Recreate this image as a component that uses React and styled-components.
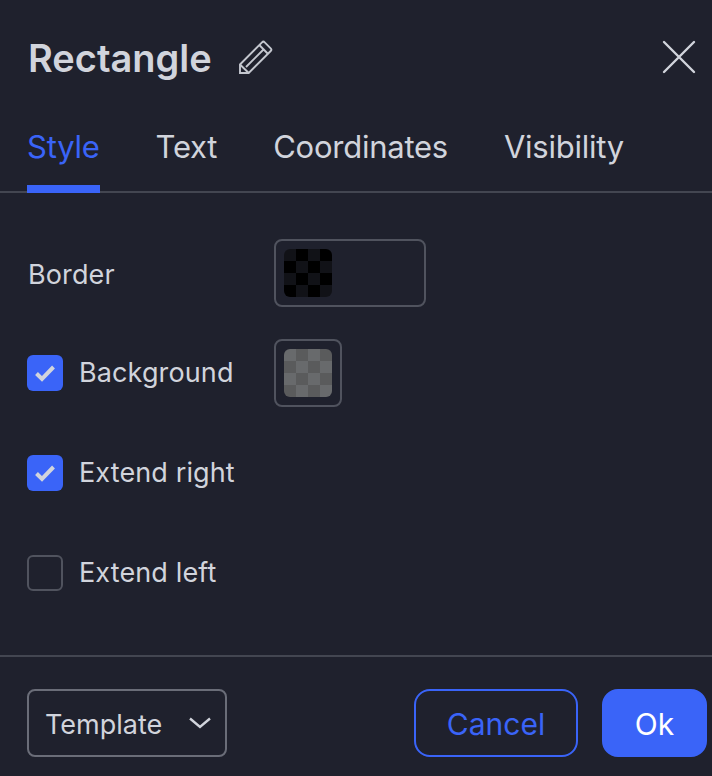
import React from 'react'
import styled, { createGlobalStyle } from 'styled-components'

const blue = '#3a64f8'
const text = '#d1d4dc'
const background = '#1f212d'

const GlobalStyle = createGlobalStyle`
  html, body {
    margin: 0;
    padding: 0;
    background: ${background};
  }
  * {
    box-sizing: border-box;
  }
`

const Dialog = styled.div`
  width: 712px;
  height: 776px;
  overflow: hidden;
  display: flex;
  flex-direction: column;
  background: ${background};
  color: ${text};
  font-family: Inter, "Liberation Sans", sans-serif;
`

const Header = styled.div`
  height: 112px;
  padding: 0 16px 0 28px;
  display: flex;
  align-items: center;
  flex-shrink: 0;
`

const Title = styled.h1`
  margin: 4px 0 0;
  font-size: 38px;
  line-height: 46px;
  font-weight: 600;
  color: ${text};
`

const EditIcon = styled.svg`
  margin: 2px 0 0 27px;
  width: 34px;
  height: 34px;
`

const CloseIcon = styled.svg`
  margin: 2px 0 0 auto;
  width: 34px;
  height: 34px;
`

const Tabs = styled.div`
  height: 81px;
  padding-left: 27px;
  display: flex;
  gap: 56px;
  border-bottom: 2px solid #434651;
  flex-shrink: 0;
`

const Tab = styled.div`
  position: relative;
  height: 81px;
  padding-top: 16px;
  font-size: 31px;
  letter-spacing: -0.25px;
  line-height: 38px;
  color: ${(p) => (p.$active ? blue : text)};

  &::after {
    content: '';
    display: ${(p) => (p.$active ? 'block' : 'none')};
    position: absolute;
    left: 0;
    right: 0;
    bottom: 0;
    height: 8px;
    background: ${blue};
  }
`

const Body = styled.div`
  flex: 1;
  padding: 46px 27px 0;
  display: flex;
  flex-direction: column;
  gap: 32px;
`

const Row = styled.div`
  height: 68px;
  display: flex;
  align-items: center;
`

const LabelCell = styled.div`
  width: 247px;
  display: flex;
  align-items: center;
  gap: 16px;
  font-size: 27px;
  letter-spacing: 0.12px;
  line-height: 34px;
`

const RowLabel = styled.span`
  padding: ${(p) => (p.$plain ? '4px 0 0 1px' : '0')};
`

const Checkbox = styled.span`
  width: 36px;
  height: 36px;
  border-radius: 6px;
  display: flex;
  align-items: center;
  justify-content: center;
  background: ${(p) => (p.$checked ? blue : 'transparent')};
  border: ${(p) => (p.$checked ? 'none' : '2px solid #50535e')};
`

const SwatchBox = styled.div`
  width: ${(p) => (p.$wide ? '152px' : '68px')};
  height: 68px;
  padding: 8px;
  border: 2px solid #50535e;
  border-radius: 8px;
`

const Swatch = styled.div`
  width: 48px;
  height: 48px;
  border-radius: 6px;
  background-image: conic-gradient(
    ${(p) => p.$dark} 25%,
    ${(p) => p.$light} 0 50%,
    ${(p) => p.$dark} 0 75%,
    ${(p) => p.$light} 0
  );
  background-size: 24px 24px;
`

const Footer = styled.div`
  height: 121px;
  padding: 32px 5px 0 27px;
  display: flex;
  align-items: flex-start;
  border-top: 2px solid #434651;
  flex-shrink: 0;
`

const Select = styled.div`
  width: 200px;
  height: 68px;
  padding: 2px 14px 0 16px;
  display: flex;
  align-items: center;
  justify-content: space-between;
  border: 2px solid #6a6d78;
  border-radius: 8px;
  font-size: 27px;
  color: ${text};
`

const Chevron = styled.svg`
  margin-top: -3px;
`

const Button = styled.button`
  height: 68px;
  width: ${(p) => p.$width}px;
  margin-left: ${(p) => p.$gap}px;
  padding: 2px 0 0;
  border-radius: 16px;
  border: 2px solid ${blue};
  background: ${(p) => (p.$primary ? blue : 'transparent')};
  color: ${(p) => (p.$primary ? '#ffffff' : blue)};
  font-family: inherit;
  font-size: 30px;
`

const Check = () => (
  <svg width="22" height="18" viewBox="0 0 22 18" fill="none">
    <path d="M2.500 9.500 8 15 19.500 3" stroke={text} strokeWidth="4" />
  </svg>
)

const rows = [
  { label: 'Border', swatch: { wide: true, light: '#111217', dark: '#000000' } },
  { label: 'Background', checked: true, swatch: { light: '#686a6c', dark: '#5a5b5c' } },
  { label: 'Extend right', checked: true },
  { label: 'Extend left', checked: false },
]

export default function App() {
  return (
    <Dialog>
      <GlobalStyle />
      <Header>
        <Title>Rectangle</Title>
        <EditIcon viewBox="0 0 34 34" fill="none" stroke="#c4c7cf" strokeWidth="1.900">
          <path d="M1 33V24.500L23 2.300c.8-.8 1.900-.8 2.700 0l6 6c.8.8.8 1.900 0 2.700L9.700 33H1Z" />
          <path d="M1 24.500 9.700 33M7 27 25 9M20.300 5l8.800 9" />
        </EditIcon>
        <CloseIcon viewBox="0 0 34 34" fill="none" stroke={text} strokeWidth="2.400" strokeLinecap="round">
          <path d="M2 2 32 32M32 2 2 32" />
        </CloseIcon>
      </Header>
      <Tabs>
        <Tab $active>Style</Tab>
        <Tab>Text</Tab>
        <Tab>Coordinates</Tab>
        <Tab>Visibility</Tab>
      </Tabs>
      <Body>
        {rows.map((row) => (
          <Row key={row.label}>
            <LabelCell>
              {row.checked !== undefined && (
                <Checkbox $checked={row.checked}>{row.checked && <Check />}</Checkbox>
              )}
              <RowLabel $plain={row.checked === undefined}>{row.label}</RowLabel>
            </LabelCell>
            {row.swatch && (
              <SwatchBox $wide={row.swatch.wide}>
                <Swatch $light={row.swatch.light} $dark={row.swatch.dark} />
              </SwatchBox>
            )}
          </Row>
        ))}
      </Body>
      <Footer>
        <Select>
          Template
          <Chevron width="22" height="12" viewBox="0 0 22 12" fill="none" stroke={text} strokeWidth="2.400">
            <path d="M1 1.500 11 10 21 1.500" />
          </Chevron>
        </Select>
        <Button $width={164} $gap={187}>Cancel</Button>
        <Button $width={105} $gap={24} $primary>Ok</Button>
      </Footer>
    </Dialog>
  )
}
